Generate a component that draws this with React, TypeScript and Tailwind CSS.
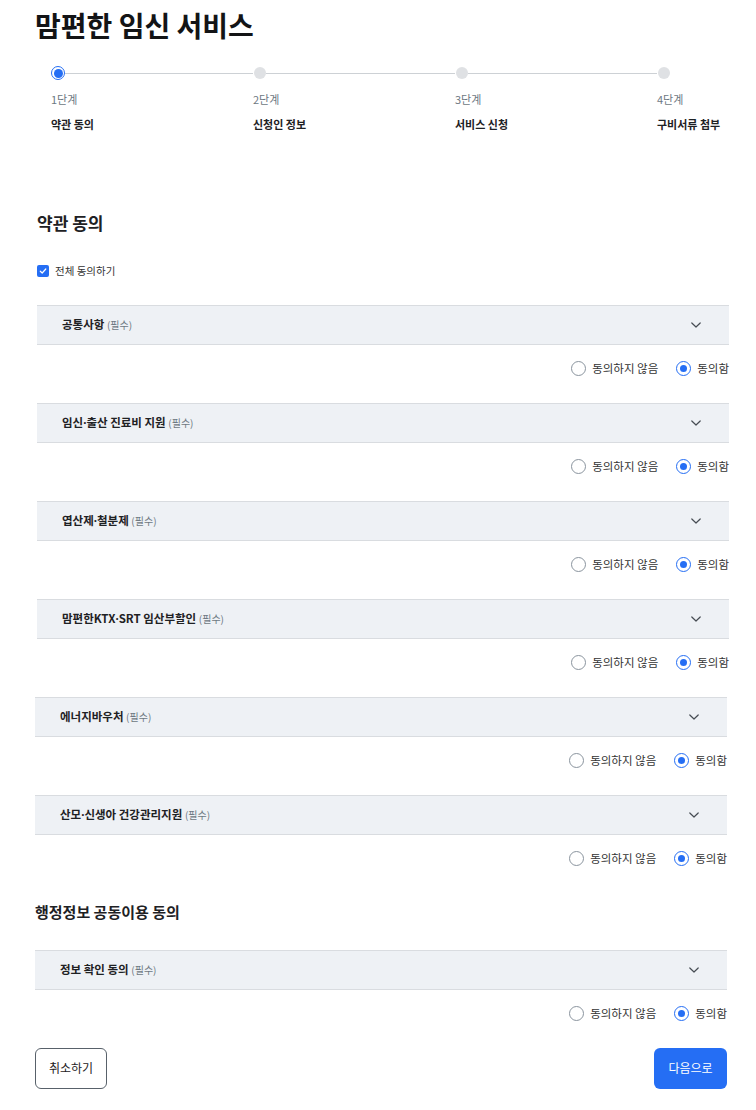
import React from "react";

const steps = [
  { no: "1단계", name: "약관 동의" },
  { no: "2단계", name: "신청인 정보" },
  { no: "3단계", name: "서비스 신청" },
  { no: "4단계", name: "구비서류 첨부" },
];

const termsTop = ["공통사항", "임신·출산 진료비 지원", "엽산제·철분제", "맘편한KTX·SRT 임산부할인"];
const termsBottom = ["에너지바우처", "산모·신생아 건강관리지원"];

function Chevron() {
  return (
    <svg width="12" height="8" viewBox="0 0 12 8" fill="none" className="text-[#464c53]">
      <path d="M1.8 2L6 6L10.2 2" stroke="currentColor" strokeWidth="1.2" strokeLinecap="round" strokeLinejoin="round" />
    </svg>
  );
}

// the middle dot is narrow in the reference, so set it in a latin face
function Dotted({ text }: { text: string }) {
  const parts = text.split("·");
  return (
    <>
      {parts.map((p, i) => (
        <React.Fragment key={i}>
          {i > 0 && <span style={{ fontFamily: '"Noto Sans", sans-serif' }}>·</span>}
          {p}
        </React.Fragment>
      ))}
    </>
  );
}

function Radio({ checked, label }: { checked?: boolean; label: string }) {
  return (
    <label className="flex items-center gap-[6px]">
      <span
        className={
          checked
            ? "flex h-[15px] w-[15px] items-center justify-center rounded-full border border-[#256ef4] bg-white"
            : "flex h-[15px] w-[15px] items-center justify-center rounded-full border border-[#8a949e] bg-white"
        }
      >
        {checked && <span className="h-[7px] w-[7px] rounded-full bg-[#256ef4]" />}
      </span>
      <span className="text-[11.5px] text-[#333]">{label}</span>
    </label>
  );
}

function Term({ title }: { title: string }) {
  return (
    <div>
      <div className="flex h-[40px] items-center justify-between border-y border-[#d9dce0] bg-[#eef1f5] pl-[25px] pr-[27px]">
        <span className="text-[11.5px] font-bold text-[#1e2124]">
          <Dotted text={title} /> <span className="text-[10px] font-normal text-[#6d7882]">(필수)</span>
        </span>
        <Chevron />
      </div>
      <div className="flex h-[58px] items-start justify-end pt-[16px]">
        <div className="flex h-[16px] items-center gap-[18px]">
          <Radio label="동의하지 않음" />
          <Radio checked label="동의함" />
        </div>
      </div>
    </div>
  );
}

export default function App() {
  return (
    <div className="min-h-[1110px] bg-white text-[#1e2124]" style={{ fontFamily: '"Noto Sans CJK KR", "Noto Sans", sans-serif' }}>
      <h1 className="pl-[35px] pt-[3px] text-[28px] font-bold leading-[44px] text-[#131416]">맘편한 임신 서비스</h1>

      <div className="mt-[19px] grid grid-cols-[202px_202px_202px_auto] pl-[51px]">
        {steps.map((s, i) => (
          <div key={s.no}>
            <div className="flex h-[14px] items-center">
              {i === 0 ? (
                <span className="flex h-[14px] w-[14px] shrink-0 items-center justify-center rounded-full border-[1.5px] border-[#256ef4] bg-white">
                  <span className="h-[9px] w-[9px] rounded-full bg-[#256ef4]" />
                </span>
              ) : (
                <span className="ml-px h-[12px] w-[12px] shrink-0 rounded-full bg-[#dfe1e4]" />
              )}
              {i < 3 && <span className="h-px flex-1 bg-[#cdd1d5]" />}
            </div>
            <div className="mt-[12px] text-[11px] leading-[14px] text-[#6d7882]">{s.no}</div>
            <div className="mt-[11px] text-[11px] font-bold leading-[14px] text-[#1e2124]">{s.name}</div>
          </div>
        ))}
      </div>

      <div className="pl-[37px] pr-[27px]">
        <h2 className="mt-[80px] text-[17px] font-bold leading-[24px] text-[#1e2124]">약관 동의</h2>
        <label className="mt-[28px] flex items-center gap-[6px]">
          <span className="flex h-[12px] w-[12px] items-center justify-center rounded-[2px] bg-[#256ef4]">
            <svg width="8" height="8" viewBox="0 0 8 8" fill="none">
              <path d="M1.3 4.2L3.2 6L6.8 2" stroke="white" strokeWidth="1.2" strokeLinecap="round" strokeLinejoin="round" />
            </svg>
          </span>
          <span className="text-[10.5px] text-[#333]">전체 동의하기</span>
        </label>
        <div className="mt-[26px]">
          {termsTop.map((t) => (
            <Term key={t} title={t} />
          ))}
        </div>
      </div>

      <div className="pl-[35px] pr-[29px]">
        {termsBottom.map((t) => (
          <Term key={t} title={t} />
        ))}
        <h2 className="mt-[9px] text-[15px] font-bold leading-[20px] text-[#1e2124]">행정정보 공동이용 동의</h2>
        <div className="mt-[28px]">
          <Term title="정보 확인 동의" />
        </div>
        <div className="flex items-center justify-between">
          <button className="h-[41px] w-[72px] rounded-[6px] border border-[#58616a] bg-white text-[12px] text-[#1e2124]">취소하기</button>
          <button className="h-[41px] w-[73px] rounded-[6px] bg-[#256ef4] text-[12px] text-white">다음으로</button>
        </div>
      </div>
    </div>
  );
}
